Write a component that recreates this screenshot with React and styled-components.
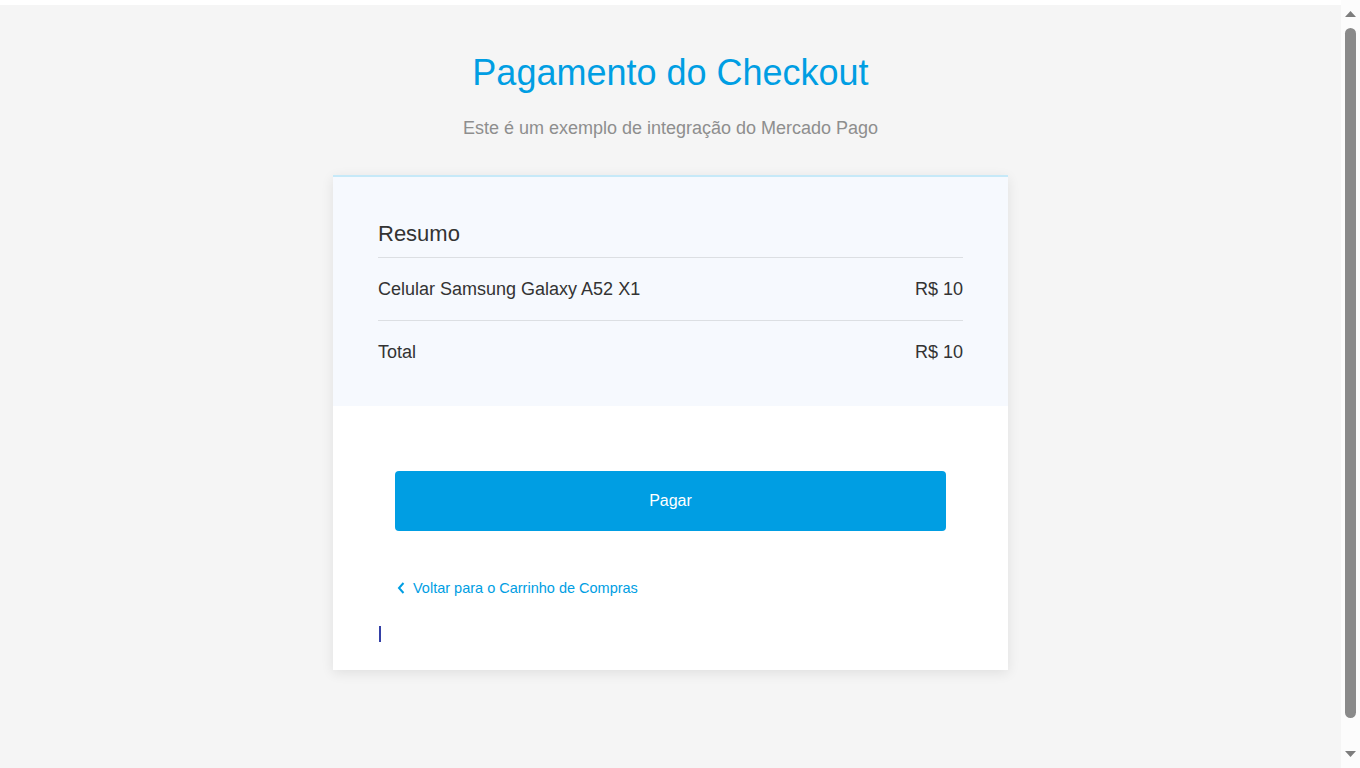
import React from "react";
import styled, { createGlobalStyle } from "styled-components";

const GlobalStyle = createGlobalStyle`
  body {
    margin: 0;
    background: #ffffff;
    font-family: "Liberation Sans", Arial, sans-serif;
    color: #333333;
  }
`;

const Shell = styled.div`
  display: flex;
  height: 768px;
  overflow: hidden;
`;

const Viewport = styled.div`
  flex: 1;
  display: flex;
  flex-direction: column;
  background: #ffffff;
`;

const Page = styled.main`
  flex: 1;
  margin-top: 5px;
  background: #f5f5f5;
  padding-top: 48px;
`;

const ScrollTrack = styled.div`
  width: 19px;
  display: flex;
  flex-direction: column;
  align-items: center;
  padding: 11px 0;
  box-sizing: border-box;
  background: #fcfcfc;
`;

const Thumb = styled.div`
  flex: 1;
  width: 11px;
  margin: 11px 0 33px;
  border-radius: 6px;
  background: #8a8a8a;
`;

const Arrow = ({ down }) => (
  <svg width="11" height="6" viewBox="0 0 11 6">
    <path d={down ? "M0 0H11L5.5 6Z" : "M0 6H11L5.5 0Z"} fill="#7d7d7d" />
  </svg>
);

const Title = styled.h1`
  margin: 0;
  text-align: center;
  font-size: 36px;
  font-weight: 400;
  line-height: 40px;
  color: #009ee3;
`;

const Subtitle = styled.p`
  margin: 24px 0 0;
  text-align: center;
  font-size: 18px;
  line-height: 22px;
  color: #8e8e8e;
`;

const Card = styled.section`
  width: 675px;
  margin: 36px auto 0;
  border-top: 2px solid #c6e9f8;
  background: #ffffff;
  box-shadow: 0 3px 12px rgba(0, 0, 0, 0.09);
`;

const Summary = styled.div`
  background: #f6f9fe;
  padding: 44px 45px 23px;
`;

const Heading = styled.h2`
  margin: 0;
  padding-bottom: 10px;
  border-bottom: 1px solid #dcdfe3;
  font-size: 22px;
  font-weight: 400;
  line-height: 26px;
  color: #333333;
`;

const Row = styled.div`
  display: flex;
  justify-content: space-between;
  align-items: center;
  padding: 20px 0;
  font-size: 18px;
  line-height: 22px;
  color: #333333;
  border-bottom: ${(props) => (props.last ? "none" : "1px solid #dcdfe3")};
`;

const Actions = styled.div`
  padding: 65px 45px 28px;
`;

const PayButton = styled.button`
  display: block;
  width: 551px;
  height: 60px;
  margin: 0 auto;
  border: none;
  border-radius: 4px;
  background: #009ee3;
  color: #ffffff;
  font-family: inherit;
  font-size: 16px;
  cursor: pointer;
`;

const BackLink = styled.a`
  display: inline-flex;
  align-items: center;
  gap: 8px;
  margin: 47px 0 0 19px;
  font-size: 14.5px;
  line-height: 20px;
  color: #009ee3;
  text-decoration: none;
  cursor: pointer;
`;

const Caret = styled.div`
  width: 2px;
  height: 16px;
  margin: 28px 0 0 1px;
  background: #3440a6;
`;

const Chevron = () => (
  <svg width="8" height="12" viewBox="0 0 8 12" fill="none">
    <path d="M6.5 1L2 6L6.5 11" stroke="#009ee3" strokeWidth="2" />
  </svg>
);

export default function App() {
  return (
    <>
      <GlobalStyle />
      <Shell>
        <Viewport>
          <Page>
            <Title>Pagamento do Checkout</Title>
            <Subtitle>Este é um exemplo de integração do Mercado Pago</Subtitle>
            <Card>
              <Summary>
                <Heading>Resumo</Heading>
                <Row>
                  <span>Celular Samsung Galaxy A52 X1</span>
                  <span>R$ 10</span>
                </Row>
                <Row last>
                  <span>Total</span>
                  <span>R$ 10</span>
                </Row>
              </Summary>
              <Actions>
                <PayButton>Pagar</PayButton>
                <BackLink>
                  <Chevron />
                  Voltar para o Carrinho de Compras
                </BackLink>
                <Caret />
              </Actions>
            </Card>
          </Page>
        </Viewport>
        <ScrollTrack>
          <Arrow />
          <Thumb />
          <Arrow down />
        </ScrollTrack>
      </Shell>
    </>
  );
}
